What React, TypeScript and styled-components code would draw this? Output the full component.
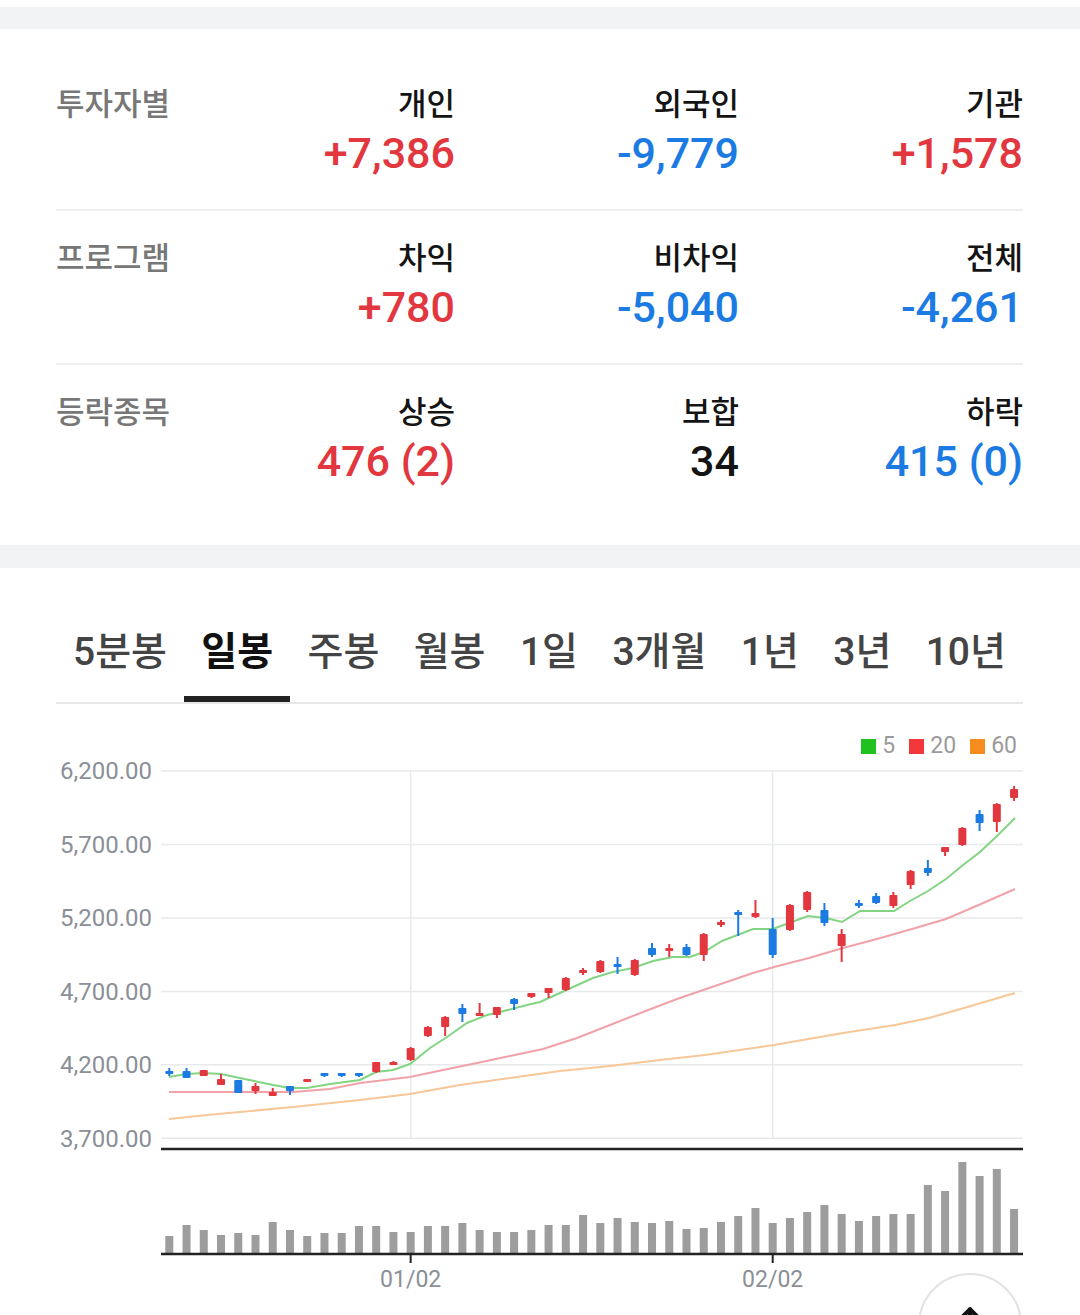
import React from 'react';
import styled, { createGlobalStyle } from 'styled-components';

const RED = '#e2373e';
const BLUE = '#1b7be2';

const GlobalStyle = createGlobalStyle`
  html, body { margin: 0; padding: 0; background: #ffffff; }
  body {
    font-family: Roboto, "Noto Sans CJK KR", sans-serif;
    -webkit-font-smoothing: antialiased;
  }
`;

const Page = styled.div`
  width: 1080px;
  padding-top: 7px;
`;

const Band = styled.div<{ $h: number }>`
  height: ${(p) => p.$h}px;
  background: #f2f3f5;
`;

const Summary = styled.section`
  padding: 28px 57px 28px 56px;
`;

const Row = styled.div`
  display: grid;
  grid-template-columns: 115px repeat(3, 1fr);
  padding: 30px 0 31px;
  & + & {
    border-top: 2px solid #eeeff1;
  }
`;

const RowLabel = styled.div`
  font-size: 31px;
  line-height: 36px;
  font-weight: 500;
  color: #777777;
  white-space: nowrap;
`;

const Stat = styled.div`
  display: flex;
  flex-direction: column;
  align-items: flex-end;
  gap: 5px;
`;

const Head = styled.div`
  font-size: 31px;
  line-height: 36px;
  font-weight: 500;
  color: #141414;
  white-space: nowrap;
`;

type Tone = 'up' | 'down' | 'flat';

const Value = styled.div<{ $tone: Tone }>`
  font-size: 43px;
  line-height: 50px;
  font-weight: 500;
  color: ${(p) => (p.$tone === 'up' ? RED : p.$tone === 'down' ? BLUE : '#141414')};
  white-space: nowrap;
`;

const ChartSection = styled.section`
  padding: 48px 57px 0 56px;
`;

const TabBar = styled.div`
  display: flex;
  justify-content: space-between;
  border-bottom: 2px solid #e6e7e9;
`;

const Tab = styled.div<{ $active?: boolean }>`
  padding: 12px 17px 20px;
  line-height: 48px;
  font-size: 39px;
  font-weight: ${(p) => (p.$active ? 700 : 500)};
  color: ${(p) => (p.$active ? '#111111' : '#444444')};
  border-bottom: 6px solid ${(p) => (p.$active ? '#222222' : 'transparent')};
  white-space: nowrap;
`;

const Legend = styled.div`
  margin-top: 30px;
  height: 24px;
  display: flex;
  justify-content: flex-end;
  align-items: center;
  gap: 14px;
  padding-right: 6px;
`;

const LegendItem = styled.div`
  display: flex;
  align-items: center;
  gap: 6px;
  font-size: 23px;
  line-height: 24px;
  color: #9b9b9b;
`;

const Swatch = styled.span<{ $c: string }>`
  width: 15px;
  height: 15px;
  background: ${(p) => p.$c};
`;

const ChartSvg = styled.svg`
  display: block;
  font-family: Roboto, sans-serif;
`;

const TopButton = styled.button`
  position: fixed;
  left: 918px;
  top: 1273px;
  width: 104px;
  height: 104px;
  border-radius: 50%;
  border: 2px solid #e2e2e2;
  background: #ffffff;
  padding: 0;
  display: flex;
  justify-content: center;
  align-items: flex-start;
  padding-top: 28px;
`;

const rows: { label: string; items: [string, string, Tone][] }[] = [
  {
    label: '투자자별',
    items: [
      ['개인', '+7,386', 'up'],
      ['외국인', '-9,779', 'down'],
      ['기관', '+1,578', 'up'],
    ],
  },
  {
    label: '프로그램',
    items: [
      ['차익', '+780', 'up'],
      ['비차익', '-5,040', 'down'],
      ['전체', '-4,261', 'down'],
    ],
  },
  {
    label: '등락종목',
    items: [
      ['상승', '476 (2)', 'up'],
      ['보합', '34', 'flat'],
      ['하락', '415 (0)', 'down'],
    ],
  },
];

const tabs = ['5분봉', '일봉', '주봉', '월봉', '1일', '3개월', '1년', '3년', '10년'];

// [type, high, bodyTop, bodyBottom, low] in chart pixel space
const CANDLES: [string, number, number, number, number][] = [
  ['d', 1068, 1071, 1074, 1076],
  ['d', 1068, 1071, 1078, 1078],
  ['u', 1070, 1070, 1076, 1076],
  ['u', 1074, 1079, 1085, 1085],
  ['d', 1080, 1080, 1093, 1093],
  ['u', 1083, 1086, 1091, 1094],
  ['u', 1088, 1092, 1096, 1096],
  ['d', 1086, 1086, 1091, 1095],
  ['u', 1079, 1079, 1081, 1081],
  ['d', 1073, 1073, 1075, 1077],
  ['d', 1073, 1073, 1075, 1077],
  ['d', 1073, 1073, 1075, 1077],
  ['u', 1062, 1062, 1072, 1073],
  ['u', 1061, 1062, 1064, 1065],
  ['u', 1047, 1048, 1060, 1061],
  ['u', 1026, 1027, 1036, 1037],
  ['u', 1016, 1017, 1027, 1036],
  ['d', 1004, 1008, 1014, 1022],
  ['u', 1003, 1013, 1015, 1016],
  ['u', 1007, 1007, 1015, 1018],
  ['d', 998, 999, 1004, 1010],
  ['u', 993, 993, 997, 998],
  ['u', 988, 988, 993, 998],
  ['u', 977, 978, 990, 991],
  ['u', 968, 970, 973, 975],
  ['u', 960, 961, 972, 973],
  ['d', 957, 964, 967, 974],
  ['u', 959, 960, 975, 976],
  ['d', 943, 948, 955, 957],
  ['u', 944, 948, 950, 957],
  ['d', 944, 947, 955, 956],
  ['u', 933, 934, 955, 961],
  ['u', 920, 922, 925, 927],
  ['d', 910, 912, 915, 936],
  ['u', 900, 913, 917, 918],
  ['d', 918, 929, 955, 958],
  ['u', 904, 905, 930, 931],
  ['u', 891, 892, 910, 912],
  ['d', 903, 910, 923, 926],
  ['u', 929, 934, 946, 962],
  ['d', 900, 903, 905, 908],
  ['d', 893, 896, 903, 904],
  ['u', 892, 895, 906, 908],
  ['u', 870, 871, 885, 889],
  ['d', 860, 868, 873, 876],
  ['u', 847, 847, 852, 856],
  ['u', 827, 828, 845, 846],
  ['d', 810, 814, 823, 831],
  ['u', 803, 804, 822, 832],
  ['u', 786, 789, 798, 801],
];

const VOLUMES = [
  18, 29, 24, 19, 21, 19, 32, 24, 18, 21, 21, 28, 28, 22, 22, 28, 28, 31, 24, 22, 22, 24, 29, 29, 39,
  31, 36, 32, 31, 33, 25, 26, 32, 38, 46, 31, 36, 42, 49, 40, 33, 38, 40, 40, 69, 63, 92, 78, 85, 45,
];

const MA5 = [
  [169, 1077], [186, 1074], [204, 1073], [221, 1074], [240, 1078], [273, 1085], [290, 1088], [307, 1088],
  [330, 1084], [360, 1080], [376, 1072], [393, 1070], [410, 1064], [430, 1048], [447, 1037], [467, 1023],
  [487, 1015], [500, 1012], [527, 1005], [540, 1002], [560, 993], [573, 987], [593, 978], [613, 972],
  [633, 968], [653, 961], [673, 957], [690, 957], [704, 952], [722, 941], [753, 929], [773, 929],
  [789, 923], [808, 916], [826, 918], [842, 922], [860, 911], [894, 911], [910, 901], [928, 891],
  [946, 879], [963, 865], [980, 852], [997, 836], [1015, 818],
];

const MA20 = [
  [169, 1092], [293, 1092], [330, 1089], [360, 1083], [410, 1077], [443, 1070], [477, 1063], [510, 1056],
  [543, 1049], [577, 1038], [610, 1025], [643, 1012], [677, 999], [712, 987], [753, 973], [774, 967],
  [809, 958], [843, 948], [877, 939], [912, 929], [946, 919], [981, 904], [1015, 889],
];

const MA60 = [
  [169, 1119], [207, 1115], [293, 1107], [360, 1100], [410, 1094], [460, 1085], [510, 1078], [560, 1071],
  [610, 1066], [660, 1060], [705, 1055], [774, 1045], [843, 1033], [895, 1025], [929, 1018], [964, 1008],
  [1015, 993],
];

const PRICE_TICKS = [6200, 5700, 5200, 4700, 4200, 3700];
const GRID_TOP = 771;
const GRID_STEP = 73.46;
const PLOT_L = 161;
const PLOT_R = 1023;
const X0 = 169.3;
const DX = 17.24;
const cx = (i: number) => X0 + i * DX;
const VOL_BASE = 1254;

const pts = (arr: number[][]) => arr.map(([x, y]) => `${x},${y}`).join(' ');

function PriceChart() {
  const dateTicks = [
    { i: 14, label: '01/02' },
    { i: 35, label: '02/02' },
  ];
  return (
    <ChartSvg width={967} height={550} viewBox="56 758 967 550">
      {PRICE_TICKS.map((p, k) => {
        const y = GRID_TOP + k * GRID_STEP;
        return (
          <g key={p}>
            <line x1={PLOT_L} x2={PLOT_R} y1={y} y2={y} stroke="#e8e9eb" strokeWidth={1.5} />
            <text x={152} y={y} dy="0.35em" textAnchor="end" fontSize={24} fill="#8b8f97">
              {p.toLocaleString('en-US', { minimumFractionDigits: 2 })}
            </text>
          </g>
        );
      })}
      {dateTicks.map((d) => (
        <line
          key={d.label}
          x1={cx(d.i)}
          x2={cx(d.i)}
          y1={GRID_TOP}
          y2={GRID_TOP + 5 * GRID_STEP}
          stroke="#e8e9eb"
          strokeWidth={1.5}
        />
      ))}
      <polyline points={pts(MA60)} fill="none" stroke="#f7c797" strokeWidth={2} />
      <polyline points={pts(MA20)} fill="none" stroke="#f0a2a8" strokeWidth={2} />
      <polyline points={pts(MA5)} fill="none" stroke="#83d483" strokeWidth={2} />
      {CANDLES.map(([t, hi, top, bot, lo], i) => {
        const x = cx(i);
        const c = t === 'u' ? RED : BLUE;
        const h = Math.max(bot - top, 3);
        return (
          <g key={i}>
            <line x1={x} x2={x} y1={hi} y2={lo} stroke={c} strokeWidth={2} />
            <rect x={x - 4} y={top} width={8} height={h} rx={1} fill={c} />
          </g>
        );
      })}
      <line x1={PLOT_L} x2={PLOT_R} y1={1149} y2={1149} stroke="#222" strokeWidth={2.5} />
      {VOLUMES.map((v, i) => (
        <rect key={i} x={cx(i) - 4} y={VOL_BASE - v} width={8} height={v} fill="#9d9d9d" />
      ))}
      <line x1={PLOT_L} x2={PLOT_R} y1={VOL_BASE} y2={VOL_BASE} stroke="#222" strokeWidth={2.5} />
      {dateTicks.map((d) => (
        <g key={d.label}>
          <line x1={cx(d.i)} x2={cx(d.i)} y1={VOL_BASE} y2={VOL_BASE + 9} stroke="#222" strokeWidth={2} />
          <text x={cx(d.i)} y={1279} dy="0.35em" textAnchor="middle" fontSize={23} fill="#8b8f97">
            {d.label}
          </text>
        </g>
      ))}
    </ChartSvg>
  );
}

export default function App() {
  return (
    <>
      <GlobalStyle />
      <Page>
        <Band $h={22} />
        <Summary>
          {rows.map((r) => (
            <Row key={r.label}>
              <RowLabel>{r.label}</RowLabel>
              {r.items.map(([h, v, tone]) => (
                <Stat key={h}>
                  <Head>{h}</Head>
                  <Value $tone={tone}>{v}</Value>
                </Stat>
              ))}
            </Row>
          ))}
        </Summary>
        <Band $h={23} />
        <ChartSection>
          <TabBar>
            {tabs.map((t) => (
              <Tab key={t} $active={t === '일봉'}>
                {t}
              </Tab>
            ))}
          </TabBar>
          <Legend>
            <LegendItem>
              <Swatch $c="#1fc21f" />5
            </LegendItem>
            <LegendItem>
              <Swatch $c="#f3383c" />20
            </LegendItem>
            <LegendItem>
              <Swatch $c="#f78b1d" />60
            </LegendItem>
          </Legend>
          <PriceChart />
        </ChartSection>
      </Page>
      <TopButton aria-label="맨 위로">
        <svg width="30" height="30" viewBox="0 0 24 24" fill="none" stroke="#111" strokeWidth={3.2} strokeLinecap="round" strokeLinejoin="round">
          <path d="M12 20V5" />
          <path d="M5 12l7-7 7 7" />
        </svg>
      </TopButton>
    </>
  );
}
